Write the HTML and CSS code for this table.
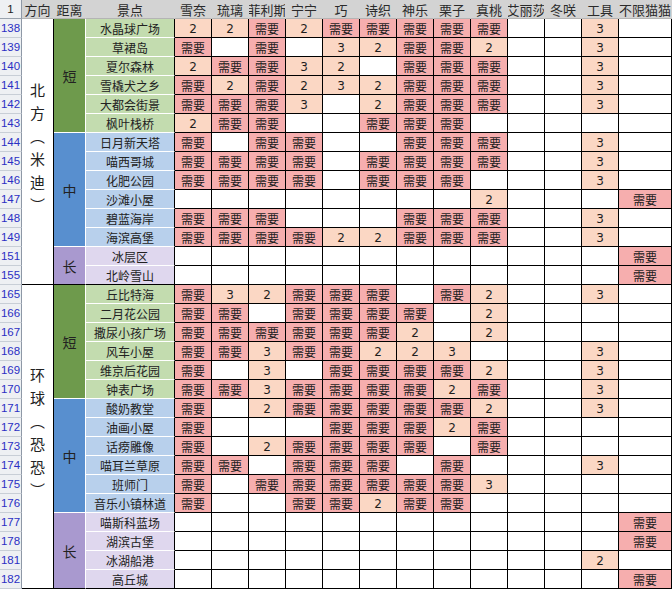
FILE: index.html
```html
<!DOCTYPE html>
<html lang="zh">
<head>
<meta charset="utf-8">
<title>景点表</title>
<link rel="stylesheet" href="styles.css">
</head>
<body>
<div class="sheet">
<div class="rh hd">1</div><div class="h">方向</div><div class="h">距离</div><div class="h">景点</div><div class="h">雪奈</div><div class="h">琉璃</div><div class="h">菲利斯</div><div class="h">宁宁</div><div class="h">巧</div><div class="h">诗织</div><div class="h">神乐</div><div class="h">栗子</div><div class="h">真桃</div><div class="h">艾丽莎</div><div class="h">冬咲</div><div class="h">工具</div><div class="h">不限猫猫</div>

<div class="rh">138</div><div class="dir s14"><span>北方（米迪）</span></div><div class="dist dg s6">短</div><div class="spot sg">水晶球广场</div><div class="n">2</div><div class="n">2</div><div class="x">需要</div><div class="n">2</div><div class="x">需要</div><div class="x">需要</div><div class="x">需要</div><div class="x">需要</div><div class="x">需要</div><div></div><div></div><div class="n">3</div><div></div>
<div class="rh">139</div><div class="spot sg">草裙岛</div><div class="x">需要</div><div></div><div class="x">需要</div><div></div><div class="n">3</div><div class="n">2</div><div class="x">需要</div><div class="x">需要</div><div class="n">2</div><div></div><div></div><div class="n">3</div><div></div>
<div class="rh">140</div><div class="spot sg">夏尔森林</div><div class="n">2</div><div class="x">需要</div><div class="x">需要</div><div class="n">3</div><div class="n">2</div><div></div><div class="x">需要</div><div class="x">需要</div><div class="x">需要</div><div></div><div></div><div class="n">3</div><div></div>
<div class="rh">141</div><div class="spot sg">雪橇犬之乡</div><div class="x">需要</div><div class="n">2</div><div class="x">需要</div><div class="n">2</div><div class="n">3</div><div class="n">2</div><div class="x">需要</div><div class="x">需要</div><div class="x">需要</div><div></div><div></div><div class="n">3</div><div></div>
<div class="rh">142</div><div class="spot sg">大都会街景</div><div class="x">需要</div><div class="x">需要</div><div class="x">需要</div><div class="n">3</div><div></div><div class="n">2</div><div class="x">需要</div><div class="x">需要</div><div class="x">需要</div><div></div><div></div><div class="n">3</div><div></div>
<div class="rh">143</div><div class="spot sg">枫叶栈桥</div><div class="n">2</div><div class="x">需要</div><div class="x">需要</div><div></div><div></div><div class="x">需要</div><div class="x">需要</div><div class="x">需要</div><div></div><div></div><div></div><div></div><div></div>
<div class="rh">144</div><div class="dist db s6">中</div><div class="spot sb">日月新天塔</div><div class="x">需要</div><div></div><div class="x">需要</div><div class="x">需要</div><div></div><div></div><div class="x">需要</div><div class="x">需要</div><div class="x">需要</div><div></div><div></div><div class="n">3</div><div></div>
<div class="rh">145</div><div class="spot sb">喵西哥城</div><div class="x">需要</div><div class="x">需要</div><div class="x">需要</div><div class="x">需要</div><div></div><div class="x">需要</div><div class="x">需要</div><div class="x">需要</div><div class="x">需要</div><div></div><div></div><div class="n">3</div><div></div>
<div class="rh">146</div><div class="spot sb">化肥公园</div><div class="x">需要</div><div class="x">需要</div><div class="x">需要</div><div class="x">需要</div><div></div><div class="x">需要</div><div class="x">需要</div><div class="x">需要</div><div></div><div></div><div></div><div class="n">3</div><div></div>
<div class="rh">147</div><div class="spot sb">沙滩小屋</div><div></div><div></div><div></div><div></div><div></div><div></div><div></div><div></div><div class="n">2</div><div></div><div></div><div></div><div class="x">需要</div>
<div class="rh">148</div><div class="spot sb">碧蓝海岸</div><div class="x">需要</div><div class="x">需要</div><div class="x">需要</div><div></div><div></div><div></div><div class="x">需要</div><div class="x">需要</div><div class="x">需要</div><div></div><div></div><div class="n">3</div><div></div>
<div class="rh">149</div><div class="spot sb">海滨高堡</div><div class="x">需要</div><div class="x">需要</div><div class="x">需要</div><div class="x">需要</div><div class="n">2</div><div class="n">2</div><div class="x">需要</div><div class="x">需要</div><div class="x">需要</div><div></div><div></div><div class="n">3</div><div></div>
<div class="rh">151</div><div class="dist dp s2 end">长</div><div class="spot sp">冰层区</div><div></div><div></div><div></div><div></div><div></div><div></div><div></div><div></div><div></div><div></div><div></div><div></div><div class="x">需要</div>
<div class="rh">155</div><div class="spot sp end">北岭雪山</div><div class="end"></div><div class="end"></div><div class="end"></div><div class="end"></div><div class="end"></div><div class="end"></div><div class="end"></div><div class="end"></div><div class="end"></div><div class="end"></div><div class="end"></div><div class="end"></div><div class="x end">需要</div>

<div class="rh">165</div><div class="dir s16"><span>环球（恐恐）</span></div><div class="dist dg s6">短</div><div class="spot sg">丘比特海</div><div class="x">需要</div><div class="n">3</div><div class="n">2</div><div class="x">需要</div><div class="x">需要</div><div class="x">需要</div><div></div><div class="x">需要</div><div class="n">2</div><div></div><div></div><div class="n">3</div><div></div>
<div class="rh">166</div><div class="spot sg">二月花公园</div><div class="x">需要</div><div class="x">需要</div><div></div><div class="x">需要</div><div class="x">需要</div><div class="x">需要</div><div class="x">需要</div><div></div><div class="n">2</div><div></div><div></div><div></div><div></div>
<div class="rh">167</div><div class="spot sg">撒尿小孩广场</div><div class="x">需要</div><div class="x">需要</div><div class="x">需要</div><div class="x">需要</div><div class="x">需要</div><div class="x">需要</div><div class="n">2</div><div></div><div class="n">2</div><div></div><div></div><div></div><div></div>
<div class="rh">168</div><div class="spot sg">风车小屋</div><div class="x">需要</div><div class="x">需要</div><div class="n">3</div><div class="x">需要</div><div class="x">需要</div><div class="n">2</div><div class="n">2</div><div class="n">3</div><div></div><div></div><div></div><div class="n">3</div><div></div>
<div class="rh">169</div><div class="spot sg">维京后花园</div><div class="x">需要</div><div></div><div class="n">3</div><div></div><div class="x">需要</div><div class="x">需要</div><div class="x">需要</div><div class="x">需要</div><div class="n">2</div><div></div><div></div><div class="n">3</div><div></div>
<div class="rh">170</div><div class="spot sg">钟表广场</div><div class="x">需要</div><div class="x">需要</div><div class="n">3</div><div class="x">需要</div><div class="x">需要</div><div class="x">需要</div><div class="x">需要</div><div class="n">2</div><div class="x">需要</div><div></div><div></div><div class="n">3</div><div></div>
<div class="rh">171</div><div class="dist db s6">中</div><div class="spot sb">酸奶教堂</div><div class="x">需要</div><div></div><div class="n">2</div><div class="x">需要</div><div class="x">需要</div><div class="x">需要</div><div class="x">需要</div><div class="x">需要</div><div class="n">2</div><div></div><div></div><div class="n">3</div><div></div>
<div class="rh">172</div><div class="spot sb">油画小屋</div><div class="x">需要</div><div></div><div></div><div></div><div class="x">需要</div><div class="x">需要</div><div class="x">需要</div><div class="n">2</div><div class="x">需要</div><div></div><div></div><div></div><div></div>
<div class="rh">173</div><div class="spot sb">话痨雕像</div><div class="x">需要</div><div></div><div class="n">2</div><div class="x">需要</div><div class="x">需要</div><div class="x">需要</div><div class="x">需要</div><div></div><div class="x">需要</div><div></div><div></div><div></div><div></div>
<div class="rh">174</div><div class="spot sb">喵耳兰草原</div><div class="x">需要</div><div class="x">需要</div><div></div><div class="x">需要</div><div class="x">需要</div><div class="x">需要</div><div></div><div class="x">需要</div><div></div><div></div><div></div><div class="n">3</div><div></div>
<div class="rh">175</div><div class="spot sb">班师门</div><div class="x">需要</div><div></div><div class="x">需要</div><div class="x">需要</div><div class="x">需要</div><div class="x">需要</div><div class="x">需要</div><div class="x">需要</div><div class="n">3</div><div></div><div></div><div></div><div></div>
<div class="rh">176</div><div class="spot sb">音乐小镇林道</div><div class="x">需要</div><div></div><div></div><div class="x">需要</div><div class="x">需要</div><div class="n">2</div><div class="x">需要</div><div class="x">需要</div><div></div><div></div><div></div><div></div><div></div>
<div class="rh">177</div><div class="dist dp s4 end">长</div><div class="spot sp">喵斯科蓝场</div><div></div><div></div><div></div><div></div><div></div><div></div><div></div><div></div><div></div><div></div><div></div><div></div><div class="x">需要</div>
<div class="rh">178</div><div class="spot sp">湖滨古堡</div><div></div><div></div><div></div><div></div><div></div><div></div><div></div><div></div><div></div><div></div><div></div><div></div><div class="x">需要</div>
<div class="rh">181</div><div class="spot sp">冰湖船港</div><div></div><div></div><div></div><div></div><div></div><div></div><div></div><div></div><div></div><div></div><div></div><div class="n">2</div><div></div>
<div class="rh">182</div><div class="spot sp end">高丘城</div><div></div><div></div><div></div><div></div><div></div><div></div><div></div><div></div><div></div><div></div><div></div><div></div><div class="x">需要</div>
</div>
</body>
</html>
```
FILE: styles.css
```css
html, body {
  margin: 0;
  padding: 0;
  background: #ffffff;
  overflow: hidden;
}

.sheet {
  display: grid;
  grid-template-columns: 22px 32px 32px 89px repeat(12, 37px) 53px;
  grid-auto-rows: 19px;
  width: 672px;
  font-family: "Noto Sans CJK SC", "Liberation Sans", sans-serif;
  font-size: 12px;
  color: #1e1e1e;
}

.sheet > div {
  box-sizing: border-box;
  border-right: 1px solid #000;
  border-bottom: 1px solid #000;
  display: flex;
  align-items: center;
  justify-content: center;
  white-space: nowrap;
  overflow: hidden;
  line-height: 1;
  padding-top: 1px;
}

.sheet > .h {
  background: #d3d3d3;
  border-right-color: #d3d3d3;
  border-bottom-color: #b4b4b4;
  font-size: 13px;
  color: #2a2a2a;
}

.sheet > .h:last-child {
  font-size: 12px;
  justify-content: flex-start;
  padding-left: 3px;
}

.sheet > .rh {
  background: #eef0f3;
  border-right-color: #8e98a6;
  border-bottom-color: #c8ced6;
  color: #2b2fc4;
  font-family: "Liberation Sans", sans-serif;
  font-size: 11.5px;
}

.sheet > .rh.hd {
  color: #222;
  border-bottom-color: #9aa3ae;
}

.sheet > .dir {
  background: #fff;
  font-size: 15px;
  color: #222;
}

.dir span {
  writing-mode: vertical-rl;
  letter-spacing: 8px;
}

.sheet > .dist {
  font-size: 14px;
  border-right-color: #ffffff;
  border-bottom-color: #ffffff;
  color: #222;
}

.sheet > .spot {
  border-bottom-color: #ffffff;
  color: #222;
}

.s2 { grid-row: span 2; }
.s4 { grid-row: span 4; }
.s6 { grid-row: span 6; }
.s14 { grid-row: span 14; }
.s16 { grid-row: span 16; }

.dg { background: #6e9a4c; }
.db { background: #588fcf; }
.dp { background: #a999cf; }

.sg { background: #c3dcaf; }
.sb { background: #b8d0ec; }
.sp { background: #dfd7ee; }

.sheet > .x { background: #f6aeae; }
.sheet > .n { background: #fbd7c4; font-family: "DejaVu Sans", sans-serif; font-size: 12px; }

.sheet > .end { border-bottom-color: #000; }
```
